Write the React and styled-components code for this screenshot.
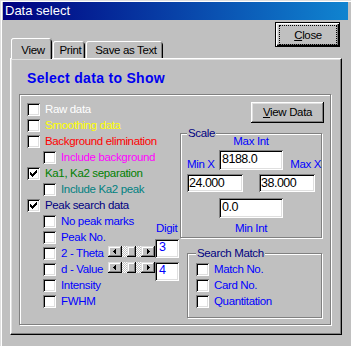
import React from 'react';
import styled, { createGlobalStyle, css } from 'styled-components';

const UI_FONT = '11.5px/13px "Liberation Sans", Arial, sans-serif';
const TIGHT = '-0.35px';

const GlobalStyle = createGlobalStyle`
  html, body { margin: 0; padding: 0; background: #c0c0c0; overflow: hidden; }
  body { font: ${UI_FONT}; }
  * { box-sizing: border-box; }
`;

const raised = css`
  box-shadow: inset -1px -1px #000, inset 1px 1px #fff, inset -2px -2px #808080, inset 2px 2px #dfdfdf;
`;
const sunken = css`
  box-shadow: inset 1px 1px #808080, inset -1px -1px #fff, inset 2px 2px #000, inset -2px -2px #dfdfdf;
`;

const Window = styled.div`
  width: 351px;
  height: 352px;
  padding: 2px 3px 3px 3px;
  background: #c0c0c0;
  box-shadow: inset 1px 1px #dfdfdf, inset 2px 2px #fff;
  display: flex;
  flex-direction: column;
`;

const TitleBar = styled.div`
  height: 18px;
  flex-shrink: 0;
  padding-left: 2px;
  background: linear-gradient(90deg, #000080, #1084d0);
  color: #fff;
  font-size: 13px;
  line-height: 18px;
  white-space: nowrap;
`;

const Body = styled.div`
  padding: 0 6px 0 7px;
`;

const Header = styled.div`
  height: 38px;
  display: flex;
  justify-content: space-between;
  align-items: flex-end;
`;

const TabRow = styled.div`
  display: flex;
  align-items: flex-end;
  padding-left: 1px;
`;

const Tab = styled.div`
  position: relative;
  z-index: 1;
  width: ${p => p.$w}px;
  height: ${p => (p.$active ? 21 : 17)}px;
  margin-bottom: ${p => (p.$active ? -1 : 0)}px;
  margin-right: 1px;
  padding-top: ${p => (p.$active ? 6 : 3)}px;
  padding-left: 3px;
  text-align: center;
  line-height: 13px;
  letter-spacing: ${TIGHT};
  white-space: nowrap;
  background: #c0c0c0;
  border-radius: 3px 3px 0 0;
  box-shadow: inset 1px 0 #fff, inset 0 1px #fff, inset -1px 0 #000, inset -2px 0 #808080;
`;

const DefaultButton = styled.button`
  align-self: flex-start;
  width: 65px;
  height: 25px;
  margin: 2px 2px 0 0;
  padding: 2px 2px 1px 3px;
  border: 1px solid #000;
  background: #c0c0c0;
  box-shadow: inset 1px 1px #fff, inset -1px -1px #000, inset -2px -2px #808080, inset 2px 2px #dfdfdf;
  font: ${UI_FONT};
  letter-spacing: ${TIGHT};
  color: #000;
  display: flex;
`;

const FocusRing = styled.span`
  flex: 1;
  border: 1px dotted #000;
  display: flex;
  align-items: center;
  justify-content: center;
`;

const Button = styled.button`
  width: ${p => p.$w}px;
  height: ${p => p.$h}px;
  padding: 0;
  border: 0;
  background: #c0c0c0;
  ${raised}
  font: ${UI_FONT};
  letter-spacing: ${TIGHT};
  color: #000;
  align-self: flex-end;
`;

const Panel = styled.div`
  width: 332px;
  height: 277px;
  border: 1px solid;
  border-color: #fff #000 #000 #fff;
  box-shadow: inset -1px -1px #808080, inset 1px 1px #dfdfdf;
  padding: 11px 0 0 8px;
`;

const Heading = styled.h1`
  margin: 0 0 8px 8px;
  font: bold 14px/16px "Liberation Sans", Arial, sans-serif;
  letter-spacing: 0.3px;
  color: #0000f0;
  white-space: nowrap;
`;

const Frame = styled.div`
  position: relative;
  border: 1px solid #808080;
  box-shadow: inset 1px 1px #fff, 1px 1px #fff;
`;

const Legend = styled.span`
  position: absolute;
  top: -7px;
  left: ${p => p.$left}px;
  padding: 0 1px;
  background: #c0c0c0;
  color: #000080;
  line-height: 13px;
  letter-spacing: ${TIGHT};
  white-space: nowrap;
`;

const MainGroup = styled(Frame)`
  width: 312px;
  height: 231px;
  padding: 7px 0 0 7px;
  display: flex;
  align-items: flex-start;
`;

const LeftCol = styled.div`
  width: 128px;
  flex-shrink: 0;
  padding-top: 1px;
  display: flex;
  flex-direction: column;
  gap: 3px;
`;

const Row = styled.div`
  height: 13px;
  display: flex;
  align-items: flex-start;
  padding-left: ${p => (p.$indent ? 16 : 0)}px;
`;

const CheckBox = styled.span`
  width: 13px;
  height: 13px;
  flex-shrink: 0;
  background: #fff;
  ${sunken}
  display: block;
  svg { display: block; }
`;

const Label = styled.span`
  margin-left: 5px;
  ${p => (p.$width ? `width: ${p.$width}px;` : '')}
  flex-shrink: 0;
  color: ${p => p.$color};
  line-height: 13px;
  letter-spacing: ${TIGHT};
  white-space: nowrap;
`;

const ScrollBar = styled.div`
  display: flex;
  width: 47px;
  height: 11px;
  margin-top: -1px;
  flex-shrink: 0;
`;

const ScrollBtn = styled.div`
  width: 14px;
  height: 11px;
  background: #c0c0c0;
  box-shadow: inset -1px -1px #000, inset 1px 1px #dfdfdf, inset -2px -2px #808080, inset 2px 2px #fff;
  display: flex;
  align-items: center;
  justify-content: center;
  svg { display: block; }
`;

const Track = styled.div`
  flex: 1;
  padding-left: 5px;
  background-color: #fff;
  background-image: conic-gradient(#c0c0c0 25%, #fff 0 50%, #c0c0c0 0 75%, #fff 0);
  background-size: 2px 2px;
`;

const Thumb = styled.div`
  width: 9px;
  height: 11px;
  background: #c0c0c0;
  box-shadow: inset -1px -1px #000, inset 1px 1px #dfdfdf, inset -2px -2px #808080, inset 2px 2px #fff;
`;

const DigitCol = styled.div`
  width: 24px;
  flex-shrink: 0;
  margin-top: 120px;
  display: flex;
  flex-direction: column;
`;

const BlueText = styled.span`
  color: #0000ff;
  line-height: 13px;
  letter-spacing: ${TIGHT};
  white-space: nowrap;
  padding-left: ${p => p.$pl || 0}px;
`;

const Field = styled.div`
  width: ${p => p.$w}px;
  height: ${p => p.$h}px;
  margin-top: ${p => p.$mt || 0}px;
  padding-left: ${p => p.$pl || 3}px;
  background: #fff;
  ${sunken}
  color: ${p => p.$color || '#000'};
  font-size: 12.5px;
  line-height: ${p => p.$lh || 19}px;
  letter-spacing: -0.5px;
  white-space: nowrap;
  overflow: hidden;
`;

const RightCol = styled.div`
  margin-left: 1px;
  width: 144px;
  flex-shrink: 0;
  display: flex;
  flex-direction: column;
  align-items: flex-start;
`;

const ScaleGroup = styled(Frame)`
  width: 142px;
  height: 105px;
  margin-top: 10px;
  padding: 1px 0 2px 6px;
  display: flex;
  flex-direction: column;
`;

const ScaleRow = styled.div`
  display: grid;
  grid-template-columns: ${p => p.$cols};
  column-gap: ${p => p.$gap || 0}px;
  margin-top: ${p => p.$mt}px;
  align-items: end;
`;

const CenterLabel = styled(BlueText)`
  display: block;
  text-align: center;
  padding-right: 6px;
  margin-top: ${p => p.$mt || 0}px;
`;

const SideLabel = styled(BlueText)`
  margin-bottom: -1px;
  justify-self: ${p => p.$justify};
`;

const CenterField = styled.div`
  display: flex;
  justify-content: center;
  padding-right: 6px;
  margin-top: ${p => p.$mt}px;
`;

const SearchGroup = styled(Frame)`
  width: 135px;
  height: 65px;
  margin: 15px 0 0 7px;
  padding: 9px 0 0 8px;
  display: flex;
  flex-direction: column;
  gap: 3px;
`;

const CheckMark = () => (
  <svg width="13" height="13" viewBox="0 0 13 13" shapeRendering="crispEdges">
    <path
      fill="#000"
      d="M3 5h1v3H3z M4 6h1v3H4z M5 7h1v3H5z M6 6h1v3H6z M7 5h1v3H7z M8 4h1v3H8z M9 3h1v3H9z"
    />
  </svg>
);

const Check = ({ checked }) => <CheckBox>{checked ? <CheckMark /> : null}</CheckBox>;

const Arrow = ({ dir }) => (
  <svg width="4" height="5" viewBox="0 0 4 5" shapeRendering="crispEdges">
    <path
      fill="#000"
      d={dir === 'left' ? 'M0 2h1v1H0z M1 1h1v3H1z M2 0h1v5H2z' : 'M1 0h1v5H1z M2 1h1v3H2z M3 2h1v1H3z'}
    />
  </svg>
);

const Scroller = () => (
  <ScrollBar>
    <ScrollBtn><Arrow dir="left" /></ScrollBtn>
    <Track><Thumb /></Track>
    <ScrollBtn><Arrow dir="right" /></ScrollBtn>
  </ScrollBar>
);

const rows = [
  { label: 'Raw data', color: '#ffffff' },
  { label: 'Smoothing data', color: '#ffff00' },
  { label: 'Background elimination', color: '#ff0000' },
  { label: 'Include background', color: '#ff00ff', indent: true },
  { label: 'Ka1, Ka2 separation', color: '#008000', checked: true },
  { label: 'Include Ka2 peak', color: '#008080', indent: true },
  { label: 'Peak search data', color: '#000080', checked: true },
  { label: 'No peak marks', color: '#0000ff', indent: true },
  { label: 'Peak No.', color: '#0000ff', indent: true },
  { label: '2 - Theta', color: '#0000ff', indent: true, scroll: true },
  { label: 'd - Value', color: '#0000ff', indent: true, scroll: true },
  { label: 'Intensity', color: '#0000ff', indent: true },
  { label: 'FWHM', color: '#0000ff', indent: true },
];

const matches = ['Match No.', 'Card No.', 'Quantitation'];

export default function App() {
  return (
    <>
      <GlobalStyle />
      <Window>
        <TitleBar>Data select</TitleBar>
        <Body>
          <Header>
            <TabRow>
              <Tab $active $w={41}>View</Tab>
              <Tab $w={32}>Print</Tab>
              <Tab $w={77}>Save as Text</Tab>
            </TabRow>
            <DefaultButton>
              <FocusRing><u>C</u>lose</FocusRing>
            </DefaultButton>
          </Header>
          <Panel>
            <Heading>Select data to Show</Heading>
            <MainGroup>
              <LeftCol>
                {rows.map(r => (
                  <Row key={r.label} $indent={r.indent}>
                    <Check checked={r.checked} />
                    <Label $color={r.color} $width={r.scroll ? 47 : undefined}>{r.label}</Label>
                    {r.scroll ? <Scroller /> : null}
                  </Row>
                ))}
              </LeftCol>
              <DigitCol>
                <BlueText $pl={1}>Digit</BlueText>
                <Field $w={24} $h={19} $mt={4} $pl={4} $lh={17} $color="#0000ff">3</Field>
                <Field $w={24} $h={19} $mt={4} $pl={4} $lh={17} $color="#0000ff">4</Field>
              </DigitCol>
              <RightCol>
                <Button $w={73} $h={21}><u>V</u>iew Data</Button>
                <ScaleGroup>
                  <Legend $left={6}>Scale</Legend>
                  <CenterLabel>Max Int</CenterLabel>
                  <ScaleRow $cols="32px 64px 1fr" $mt={2}>
                    <SideLabel $justify="start">Min X</SideLabel>
                    <Field $w={64} $h={20}>8188.0</Field>
                    <SideLabel $justify="end">Max X</SideLabel>
                  </ScaleRow>
                  <ScaleRow $cols="56px 56px" $gap={16} $mt={4}>
                    <Field $w={56} $h={18} $pl={2}>24.000</Field>
                    <Field $w={56} $h={18} $pl={2}>38.000</Field>
                  </ScaleRow>
                  <CenterField $mt={6}>
                    <Field $w={64} $h={20}>0.0</Field>
                  </CenterField>
                  <CenterLabel $mt={4}>Min Int</CenterLabel>
                </ScaleGroup>
                <SearchGroup>
                  <Legend $left={8}>Search Match</Legend>
                  {matches.map(m => (
                    <Row key={m}>
                      <Check />
                      <Label $color="#0000ff">{m}</Label>
                    </Row>
                  ))}
                </SearchGroup>
              </RightCol>
            </MainGroup>
          </Panel>
        </Body>
      </Window>
    </>
  );
}
